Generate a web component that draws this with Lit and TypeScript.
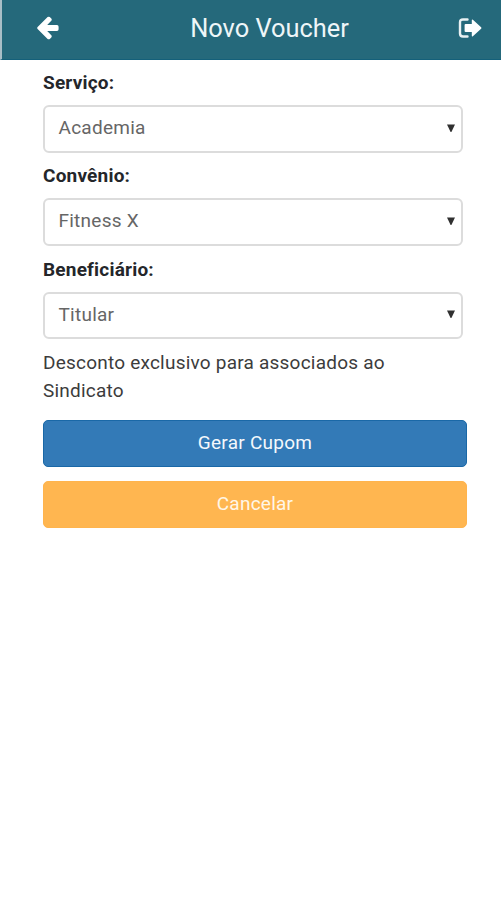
import { LitElement, html, css } from "lit";
import { customElement, property } from "lit/decorators.js";

@customElement("voucher-field")
class VoucherField extends LitElement {
  @property() label = "";
  @property() value = "";

  static styles = css`
    :host { display: block; height: 93.4px; }
    .label { height: 28px; line-height: 28px; margin-bottom: 8px; font-size: 19px; font-weight: 700; color: #24262a; letter-spacing: 0.2px; }
    .select { box-sizing: border-box; width: 420px; height: 47.6px; border: 2px solid #dcdcdc; border-radius: 6px; padding: 0 6.5px 2.6px 13.5px; display: flex; align-items: center; justify-content: space-between; color: #666; font-size: 19px; letter-spacing: 0.25px; background: #fff; }
    .caret { width: 8px; height: 8px; fill: #303030; display: block; }
  `;

  render() {
    return html`
      <div class="label"><span>${this.label}</span></div>
      <div class="select" role="combobox" aria-label=${this.label}>
        <span>${this.value}</span>
        <svg class="caret" viewBox="0 0 8 8"><path d="M0 0.5H8L4.4 8H3.6Z" /></svg>
      </div>`;
  }
}

@customElement("app-root")
class AppRoot extends LitElement {
  static styles = css`
    :host { display: block; min-height: 900px; background: #fff; font-family: Roboto, "Liberation Sans", sans-serif; }
    .bar { box-sizing: border-box; height: 60px; background: #25697b; border-left: 2px solid #a9bfc7; border-bottom: 1px solid #14607a; display: grid; grid-template-columns: 92px 1fr 56px; align-items: center; padding-bottom: 3px; }
    .back { width: 22px; height: 24px; margin-left: 34.5px; display: block; }
    .title { justify-self: center; color: #eef6f8; font-size: 25.4px; line-height: 32px; }
    .exit { width: 24px; height: 20px; display: block; margin-left: 12.5px; }
    .form { padding: 9px 33px 0 43px; }
    .note { margin: 0; width: 380px; color: #3c3c3c; font-size: 19px; line-height: 28px; letter-spacing: 0.22px; }
    .btn { box-sizing: border-box; display: block; width: 424px; height: 47px; border-radius: 5px; border: 1px solid; padding: 0 0 2px; font-family: inherit; font-size: 19px; letter-spacing: 0.25px; text-align: center; color: #f4f8fc; }
    .primary { margin-top: 15px; background: #337ab7; border-color: #1a68a7; }
    .warn { margin-top: 14px; background: #ffb650; border-color: #ffb44d; color: #fff6e8; }
  `;

  render() {
    return html`
      <header class="bar">
        <svg class="back" viewBox="0 0 22 24" role="img" aria-label="Voltar">
          <path d="M0.6 11.1L10.6 1.1Q11.7 0.2 12.8 1.1L14.3 2.6Q15.2 3.7 14.3 4.8L10.2 9H20Q21.6 9 21.6 10.8V13.2Q21.6 15 20 15H10.2L14.3 19.2Q15.2 20.3 14.3 21.4L12.8 22.9Q11.7 23.8 10.6 22.9L0.6 12.9Q-0.2 12 0.6 11.1Z" fill="#fff" />
        </svg>
        <span class="title">Novo Voucher</span>
        <svg class="exit" viewBox="0 0 24 20" role="img" aria-label="Sair">
          <path d="M9.5 1.5H5Q2 1.5 2 4.5V15.5Q2 18.5 5 18.5H9.5" fill="none" stroke="#e9f1f3" stroke-width="2.4" stroke-linecap="round" />
          <path d="M7.6 6H13.8V2.2Q13.8 0.9 14.9 1.8L23.1 9.3Q23.9 10 23.1 10.7L14.9 18.2Q13.8 19.1 13.8 17.8V14H7.6Q6.6 14 6.6 13V7Q6.6 6 7.6 6Z" fill="#fff" />
        </svg>
      </header>
      <main class="form">
        <voucher-field label="Serviço:" value="Academia"></voucher-field>
        <voucher-field label="Convênio:" value="Fitness X"></voucher-field>
        <voucher-field label="Beneficiário:" value="Titular"></voucher-field>
        <p class="note">Desconto exclusivo para associados ao Sindicato</p>
        <button class="btn primary">Gerar Cupom</button>
        <button class="btn warn">Cancelar</button>
      </main>`;
  }
}
